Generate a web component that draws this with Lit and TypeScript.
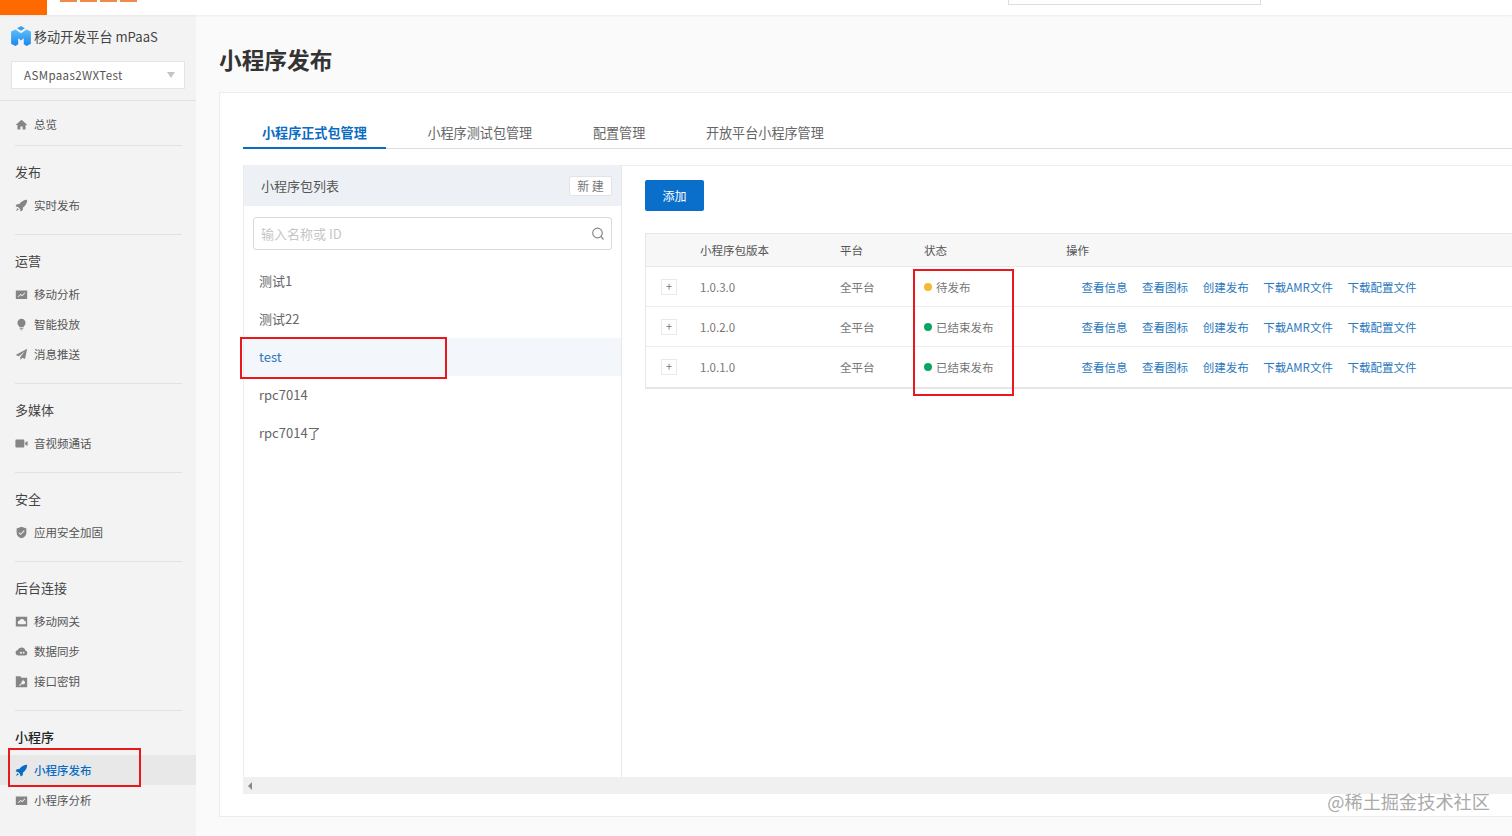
import { LitElement, css, html, svg } from 'lit'
import { customElement } from 'lit/decorators.js'

const icons: Record<string, unknown> = {
  home: svg`<path d="M8 2 .8 8.600h2.200V14h3.600v-3.600h2.800V14h3.600V8.600h2.200z"/>`,
  rocket: svg`<path d="M15 1c-4.200.1-7.400 2-9.600 5.200L2.200 6.600.7 9.300l3.100.6 2.400 2.400.6 3 2.700-1.500.4-3.200C13 8.400 14.900 5.200 15 1z"/><path d="M3 11.200 1.200 14.800 4.800 13z"/>`,
  chart: svg`<path fill-rule="evenodd" d="M1 3h14v10.500H1zM3.500 10.500l.8.700 2.700-2.500 1.800 1.300 3.900-3.700-.8-.7-3.200 3-1.800-1.300-3.400 3.200z"/>`,
  bulb: svg`<path d="M8 1a5 5 0 0 0-2.800 9.100V11.500h5.600v-1.400A5 5 0 0 0 8 1zM5.800 12.500h4.400v1.100H5.800zM6.800 14.300h2.400V15H6.800z"/>`,
  plane: svg`<path d="M15 1 .8 8.500l3.900 1.700L12 4.200 6.500 11.200v3.600l2.500-2.900 3.300 1.500z"/>`,
  video: svg`<path d="M1.800 3h8.400c.7 0 1.300.6 1.300 1.300v7.400c0 .7-.6 1.300-1.300 1.300H1.800C1.100 13 .5 12.400.5 11.700V4.300C.5 3.600 1.100 3 1.800 3zM12.500 6.800 15.500 5v6l-3-1.800z"/>`,
  shield: svg`<path fill-rule="evenodd" d="M8 .8 14 3v5.200c0 3.400-2.500 5.800-6 7-3.500-1.200-6-3.600-6-7V3zM5.200 7.600 4.300 8.500 7 11.200l4.800-5-.9-.9L7 9.400z"/>`,
  gateway: svg`<path fill-rule="evenodd" d="M1 2h14v12H1zM4.800 11.500h6.700a2 2 0 0 0 .3-4 3.200 3.200 0 0 0-6-.8 2.500 2.500 0 0 0-1 4.800z"/>`,
  cloud: svg`<path fill-rule="evenodd" d="M4 13a3.500 3.500 0 0 1-.7-6.900 5 5 0 0 1 9.500.6A3.200 3.200 0 0 1 12.200 13zM6 9.500a1.300 1.300 0 1 0 2.600 0 1.300 1.300 0 0 0-2.600 0zM9.500 9.500a1.100 1.100 0 1 0 2.200 0 1.100 1.100 0 0 0-2.200 0z"/>`,
  key: svg`<path fill-rule="evenodd" d="M1 1.500h5.500L8 3.500h7V15H1zM5 12.500l1 1 2.500-2.500 1 .3a2.200 2.200 0 1 0-1.500-1.500zM10 7.500a.8.8 0 1 1 .01 0z"/>`,
}

const nav = [
  { items: [['home', '总览']] },
  { title: '发布', items: [['rocket', '实时发布']] },
  { title: '运营', items: [['chart', '移动分析'], ['bulb', '智能投放'], ['plane', '消息推送']] },
  { title: '多媒体', items: [['video', '音视频通话']] },
  { title: '安全', items: [['shield', '应用安全加固']] },
  { title: '后台连接', items: [['gateway', '移动网关'], ['cloud', '数据同步'], ['key', '接口密钥']] },
  { title: '小程序', active: true, items: [['rocket', '小程序发布'], ['chart', '小程序分析']] },
]

const tabs = ['小程序正式包管理', '小程序测试包管理', '配置管理', '开放平台小程序管理']
const packages = ['测试1', '测试22', 'test', 'rpc7014', 'rpc7014了']
const rows = [
  { version: '1.0.3.0', status: '待发布', tone: 'pending' },
  { version: '1.0.2.0', status: '已结束发布', tone: 'done' },
  { version: '1.0.1.0', status: '已结束发布', tone: 'done' },
]
const actions = ['查看信息', '查看图标', '创建发布', '下载AMR文件', '下载配置文件']

@customElement('app-root')
export class AppRoot extends LitElement {
  static styles = css`
    :host {
      display: flex;
      flex-direction: column;
      position: relative;
      width: 1512px;
      height: 836px;
      overflow: hidden;
      background: #fafafa;
      color: #555;
      font-family: "Noto Sans CJK SC", "Noto Sans", sans-serif;
      font-size: 11.5px;
    }

    .topbar {
      flex: none;
      display: flex;
      height: 15px;
      background: #fff;
      box-shadow: 0 1px 2px rgba(0, 0, 0, 0.05);
      position: relative;
      z-index: 1;
    }
    .orange {
      width: 47px;
      background: #ff6a00;
    }
    .brand {
      display: flex;
      gap: 3px;
      height: 2px;
      margin-left: 13px;
      width: 77px;
    }
    .brand i {
      flex: 1;
      background: #f08a4b;
    }
    .top-search {
      width: 253px;
      height: 5px;
      margin-left: auto;
      margin-right: 251px;
      border: 1px solid #ddd;
      border-top: none;
      box-sizing: border-box;
    }

    .body {
      flex: 1;
      display: flex;
      min-height: 0;
    }

    aside {
      flex: none;
      width: 196px;
      background: #f3f3f3;
      overflow: hidden;
    }
    .product {
      display: flex;
      align-items: center;
      gap: 2px;
      height: 24px;
      margin: 9px 0 0 10px;
      font-size: 13.1px;
      color: #444;
      white-space: nowrap;
    }
    .product svg {
      width: 22px;
      height: 22px;
    }
    .select {
      display: flex;
      align-items: center;
      justify-content: space-between;
      box-sizing: border-box;
      width: 174px;
      height: 28px;
      margin: 13px 0 11px 11px;
      padding: 0 9px 0 12px;
      background: #fff;
      border: 1px solid #e4e4e4;
      color: #555;
      font-size: 11.5px;
      letter-spacing: 0.4px;
    }
    .caret {
      border: 4.5px solid transparent;
      border-top: 6px solid #c4c4c4;
      border-bottom: none;
    }
    .sep {
      border-top: 1px solid #e2e2e2;
    }
    .group {
      margin: 0 14px 0 15px;
      padding-bottom: 14px;
    }
    .group + .group {
      border-top: 1px solid #e2e2e2;
      padding-top: 16px;
    }
    .group.first {
      margin-top: 8px;
      padding-bottom: 6px;
    }
    .group-title {
      height: 20px;
      line-height: 19px;
      margin-bottom: 8px;
      font-size: 13px;
      color: #444;
    }
    .group-title.strong {
      color: #222;
      font-weight: 500;
    }
    .nav-item {
      display: flex;
      align-items: center;
      gap: 6px;
      height: 30px;
      margin: 0 -14px 0 -15px;
      padding-left: 15px;
      color: #555;
    }
    .nav-item svg {
      width: 13px;
      height: 13px;
      fill: #858585;
    }
    .nav-item.active {
      background: #e8e8e8;
      color: #0a6cc4;
      font-weight: 500;
    }
    .nav-item.active svg {
      fill: #0a6cc4;
    }

    main {
      flex: 1;
      min-width: 0;
      padding: 0 0 0 23px;
    }
    h1 {
      margin: 0;
      height: 77px;
      line-height: 90px;
      font-size: 22.7px;
      font-weight: 700;
      color: #333;
    }
    .card {
      box-sizing: border-box;
      height: 725px;
      margin-right: -1px;
      padding: 24px 0 22px 23px;
      background: #fff;
      border: 1px solid #ececec;
      display: flex;
      flex-direction: column;
    }

    .tabs {
      flex: none;
      display: flex;
      gap: 22.7px;
      height: 31px;
      border-bottom: 1px solid #ddd;
      font-size: 13.1px;
      color: #666;
    }
    .tab {
      padding: 0 19px;
      line-height: 32px;
      white-space: nowrap;
    }
    .tab.active {
      color: #0a6cc4;
      font-weight: 700;
      border-bottom: 2px solid #0a6cc4;
      height: 30px;
    }

    .panes {
      flex: 1;
      min-height: 0;
      display: flex;
      margin-top: 16px;
      border-left: 1px solid #ececec;
    }
    .list {
      flex: none;
      width: 378px;
      box-sizing: border-box;
      border-right: 1px solid #e8e8e8;
    }
    .list-head {
      display: flex;
      align-items: center;
      justify-content: space-between;
      height: 41px;
      padding: 0 9px 0 17px;
      background: #edf1f5;
      font-size: 13px;
      color: #555;
    }
    .new {
      box-sizing: border-box;
      width: 43px;
      height: 20px;
      line-height: 18px;
      text-align: center;
      background: #fff;
      border: 1px solid #e3e3e3;
      border-radius: 2px;
      font-size: 12px;
      color: #777;
    }
    .search {
      display: flex;
      align-items: center;
      justify-content: space-between;
      box-sizing: border-box;
      height: 33px;
      margin: 11px 9px 12px 9px;
      padding: 0 6px 0 7px;
      border: 1px solid #d9d9d9;
      border-radius: 3px;
      color: #c6c6c6;
      font-size: 13px;
    }
    .search svg {
      width: 14px;
      height: 14px;
      fill: none;
      stroke: #888;
      stroke-width: 1.2;
    }
    .pkg {
      height: 38px;
      line-height: 38px;
      padding-left: 15px;
      font-size: 13px;
      color: #666;
    }
    .pkg.selected {
      background: #f3f6fa;
      color: #2b78bd;
    }

    .detail {
      flex: 1;
      min-width: 0;
      padding: 14px 0 0 23px;
      border-top: 1px solid #ececec;
    }
    .add {
      display: block;
      width: 59px;
      height: 31px;
      padding: 0;
      border: none;
      border-radius: 2px;
      background: #0a6fcb;
      color: #fff;
      font: inherit;
      font-size: 12px;
    }
    table {
      width: 100%;
      margin-top: 22px;
      border-collapse: separate;
      border-spacing: 0;
      table-layout: fixed;
      border-left: 1px solid #e6e6e6;
      border-top: 1px solid #e6e6e6;
      border-bottom: 2px solid #e6e6e6;
    }
    th {
      height: 32px;
      padding: 0;
      background: #f7f7f7;
      border-bottom: 1px solid #e8e8e8;
      font-weight: 400;
      text-align: left;
      color: #555;
    }
    td {
      height: 40px;
      padding: 0;
      border-bottom: 1px solid #ededed;
      color: #777;
      box-sizing: border-box;
    }
    tr:last-child td {
      border-bottom: none;
    }
    .plus {
      display: block;
      box-sizing: border-box;
      width: 16px;
      height: 16px;
      margin-left: 15px;
      line-height: 13px;
      text-align: center;
      border: 1px solid #eaeaea;
      color: #777;
      font-size: 11px;
    }
    .status {
      display: flex;
      align-items: center;
      gap: 4px;
    }
    .dot {
      width: 8px;
      height: 8px;
      border-radius: 50%;
    }
    .dot.pending {
      background: #f7b731;
    }
    .dot.done {
      background: #0ba564;
    }
    .ops {
      display: flex;
      gap: 14.6px;
      padding-left: 15.5px;
      white-space: nowrap;
      color: #2b78bd;
    }

    .scrollbar {
      flex: none;
      display: flex;
      align-items: center;
      height: 17px;
      padding-left: 5px;
      background: #f0f0f0;
    }
    .arrow {
      border: 4px solid transparent;
      border-right: 4px solid #8a8a8a;
      border-left: none;
    }

    .mark {
      position: absolute;
      box-sizing: border-box;
      border: 2px solid #e8181d;
    }
    .mark.nav {
      left: 8px;
      top: 748px;
      width: 133px;
      height: 39px;
    }
    .mark.pkg-mark {
      left: 240px;
      top: 337px;
      width: 207px;
      height: 42px;
    }
    .mark.status-mark {
      left: 913px;
      top: 269px;
      width: 101px;
      height: 127px;
    }
    .watermark {
      position: absolute;
      right: 22px;
      top: 789px;
      line-height: 24px;
      font-size: 18.2px;
      color: #aaa;
      white-space: nowrap;
    }
  `

  private renderLogo() {
    return html`<svg viewBox="0 0 20 20">
      <defs>
        <linearGradient id="lg" x1="0" y1="0" x2="0" y2="1">
          <stop offset="0" stop-color="#5cc0f7"/>
          <stop offset="1" stop-color="#1b86ee"/>
        </linearGradient>
      </defs>
      <path fill="url(#lg)" d="M1 6l4-2 5 3.500L15 4l4 2v11l-4 2-2.500-1.500V12L10 14l-2.500-2v5.500L5 19l-4-2z"/>
      <path fill="#3aa0ee" d="M10 1l3.500 2L10 5.200 6.500 3z"/>
    </svg>`
  }

  private renderNav() {
    return nav.map((group, g) => html`
      <div class="group ${g === 0 ? 'first' : ''}">
        ${group.title ? html`<div class="group-title ${group.active ? 'strong' : ''}">${group.title}</div>` : ''}
        ${group.items.map(([icon, label], i) => html`
          <div class="nav-item ${group.active && i === 0 ? 'active' : ''}">
            <svg viewBox="0 0 16 16">${icons[icon]}</svg>${label}
          </div>
        `)}
      </div>
    `)
  }

  render() {
    return html`
      <div class="topbar">
        <div class="orange"></div>
        <div class="brand"><i></i><i></i><i></i><i></i></div>
        <div class="top-search"></div>
      </div>
      <div class="body">
        <aside>
          <div class="product">${this.renderLogo()}移动开发平台 mPaaS</div>
          <div class="select">ASMpaas2WXTest<span class="caret"></span></div>
          <div class="sep"></div>
          ${this.renderNav()}
        </aside>
        <main>
          <h1>小程序发布</h1>
          <div class="card">
            <div class="tabs">
              ${tabs.map((t, i) => html`<div class="tab ${i === 0 ? 'active' : ''}">${t}</div>`)}
            </div>
            <div class="panes">
              <div class="list">
                <div class="list-head">小程序包列表<span class="new">新 建</span></div>
                <div class="search">
                  输入名称或 ID
                  <svg viewBox="0 0 14 14"><circle cx="6.5" cy="6" r="4.8"/><path d="M10 9.500 12.500 12.500"/></svg>
                </div>
                ${packages.map(p => html`<div class="pkg ${p === 'test' ? 'selected' : ''}">${p}</div>`)}
              </div>
              <div class="detail">
                <button class="add">添加</button>
                <table>
                  <colgroup>
                    <col style="width:54px"/><col style="width:140px"/><col style="width:84px"/><col style="width:142px"/><col/>
                  </colgroup>
                  <thead>
                    <tr><th></th><th>小程序包版本</th><th>平台</th><th>状态</th><th>操作</th></tr>
                  </thead>
                  <tbody>
                    ${rows.map(r => html`
                      <tr>
                        <td><span class="plus">+</span></td>
                        <td>${r.version}</td>
                        <td>全平台</td>
                        <td><div class="status"><span class="dot ${r.tone}"></span>${r.status}</div></td>
                        <td><div class="ops">${actions.map(a => html`<span>${a}</span>`)}</div></td>
                      </tr>
                    `)}
                  </tbody>
                </table>
              </div>
            </div>
            <div class="scrollbar"><span class="arrow"></span></div>
          </div>
        </main>
      </div>
      <div class="mark nav"></div>
      <div class="mark pkg-mark"></div>
      <div class="mark status-mark"></div>
      <div class="watermark">@稀土掘金技术社区</div>
    `
  }
}

declare global {
  interface HTMLElementTagNameMap {
    'app-root': AppRoot
  }
}
